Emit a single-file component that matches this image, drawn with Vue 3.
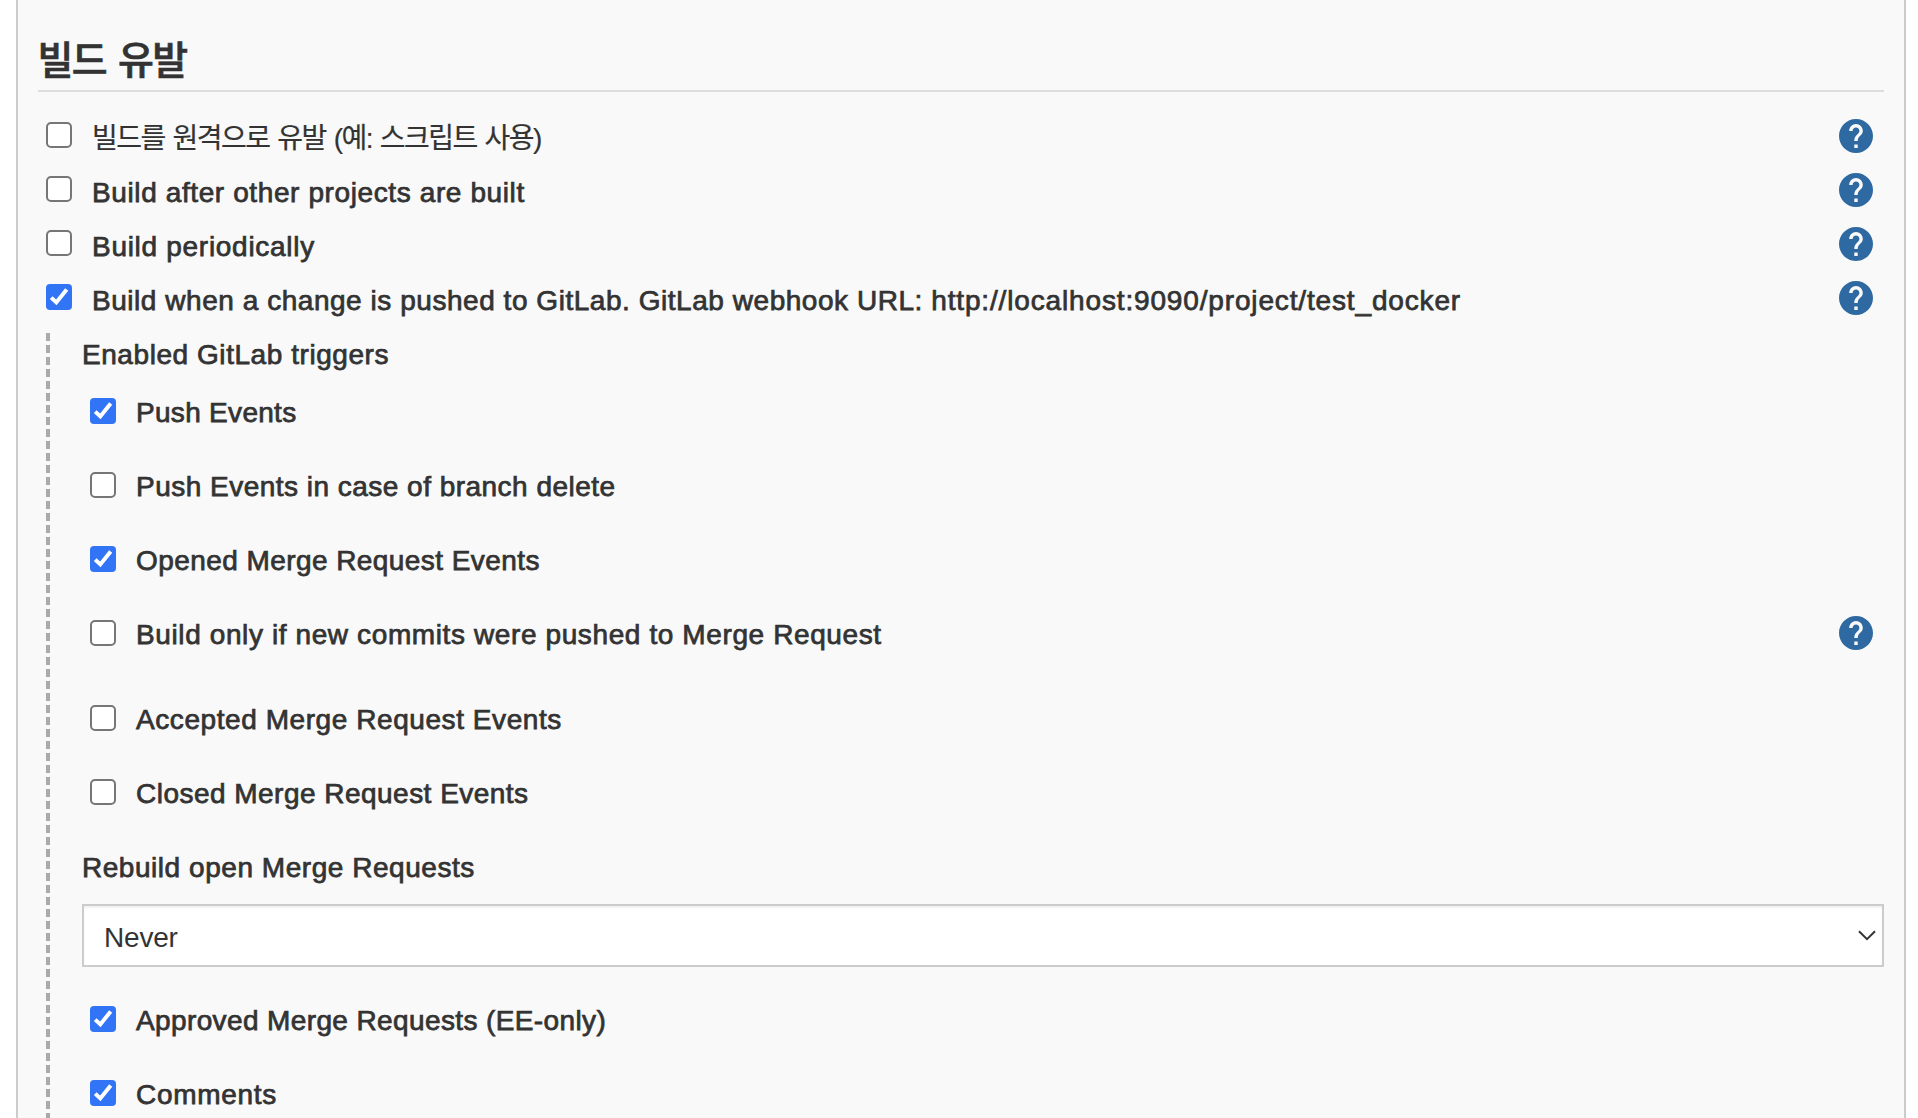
<script setup>
const triggers = [
  { text: '빌드를 원격으로 유발 (예: 스크립트 사용)', cls: 'korean', checked: false },
  { text: 'Build after other projects are built', cls: 't-after', checked: false },
  { text: 'Build periodically', cls: 't-period', checked: false },
  { text: 'Build when a change is pushed to GitLab. GitLab webhook URL: ', url: 'http://localhost:9090/project/test_docker', cls: 't-gitlab', checked: true },
]
const events = [
  { text: 'Push Events', cls: 't-push', checked: true },
  { text: 'Push Events in case of branch delete', cls: 't-delete', checked: false },
  { text: 'Opened Merge Request Events', cls: 't-opened', checked: true },
  { text: 'Build only if new commits were pushed to Merge Request', cls: 't-commits', checked: false, help: true },
  { text: 'Accepted Merge Request Events', cls: 't-accepted', checked: false },
  { text: 'Closed Merge Request Events', cls: 't-closed', checked: false },
]
const reviews = [
  { text: 'Approved Merge Requests (EE-only)', cls: 't-approved', checked: true },
  { text: 'Comments', cls: 't-comments', checked: true },
]
const helpPath = 'M12 2C6.48 2 2 6.48 2 12s4.48 10 10 10 10-4.48 10-10S17.52 2 12 2zm1 17h-2v-2h2v2zm2.07-7.75-.9.92C13.45 12.9 13 13.5 13 15h-2v-.5c0-1.1.45-2.1 1.17-2.83l1.24-1.26c.37-.36.59-.86.59-1.41 0-1.1-.9-2-2-2s-2 .9-2 2H8c0-2.21 1.79-4 4-4s4 1.79 4 4c0 .88-.36 1.68-.93 2.25z'
const checkPath = 'M5.2 13.6 10.3 18.4 20.7 5.4'
</script>

<template>
  <div class="page">
    <section class="panel">
      <h2 class="title">빌드 유발</h2>

      <div class="triggers">
        <label v-for="t in triggers" :key="t.text" class="row">
          <span class="box" :class="{ on: t.checked }">
            <svg v-if="t.checked" viewBox="0 0 26 26"><path :d="checkPath" /></svg>
          </span>
          <span class="label" :class="t.cls">{{ t.text }}<span v-if="t.url" class="url">{{ t.url }}</span></span>
          <svg class="help" viewBox="2 2 20 20"><path :d="helpPath" /></svg>
        </label>
      </div>

      <div class="nested">
        <div class="caption t-enabled">Enabled GitLab triggers</div>
        <label v-for="e in events" :key="e.text" class="row event" :class="{ tall: e.help }">
          <span class="box" :class="{ on: e.checked }">
            <svg v-if="e.checked" viewBox="0 0 26 26"><path :d="checkPath" /></svg>
          </span>
          <span class="label" :class="e.cls">{{ e.text }}</span>
          <svg v-if="e.help" class="help" viewBox="2 2 20 20"><path :d="helpPath" /></svg>
        </label>
        <div class="caption rebuild t-rebuild">Rebuild open Merge Requests</div>
        <div class="select">
          <span class="t-never">Never</span>
          <svg viewBox="0 0 18 11"><path d="M1 1.2 9 9.2 17 1.2" /></svg>
        </div>
        <label v-for="r in reviews" :key="r.text" class="row event">
          <span class="box" :class="{ on: r.checked }">
            <svg v-if="r.checked" viewBox="0 0 26 26"><path :d="checkPath" /></svg>
          </span>
          <span class="label" :class="r.cls">{{ r.text }}</span>
        </label>
      </div>
    </section>
  </div>
</template>

<style scoped>
.page {
  width: 1918px;
  height: 1118px;
  overflow: hidden;
  box-sizing: border-box;
  padding: 0 12px 0 16px;
  background: #fff;
  color: #333;
  font-family: "Liberation Sans", "Noto Sans CJK KR", sans-serif;
  font-size: 28px;
  line-height: 34px;
}
.panel {
  height: 1118px;
  box-sizing: border-box;
  border: solid #ccc;
  border-width: 0 2px;
  background: #f9f9f9;
  padding: 0 20px;
}
.title {
  margin: 0;
  height: 92px;
  box-sizing: border-box;
  border-bottom: 2px solid #ddd;
  padding-top: 28px;
  font: 500 39px/58px "Noto Sans CJK KR", sans-serif;
  letter-spacing: -1.6px;
  word-spacing: 4.8px;
  text-indent: -0.5px;
  white-space: nowrap;
  -webkit-text-stroke: 0.7px #333;
}
.triggers {
  padding-top: 30px;
}
.row {
  display: flex;
  align-items: flex-start;
  height: 54px;
  padding-left: 8px;
}
.box {
  flex: none;
  width: 26px;
  height: 26px;
  box-sizing: border-box;
  border: 2px solid #767676;
  border-radius: 5px;
  background: #fff;
}
.box.on {
  border: 0;
  border-radius: 4px;
  background: #3174f6;
}
.box svg {
  display: block;
}
.box path {
  fill: none;
  stroke: #fff;
  stroke-width: 4;
}
.label {
  margin-left: 20px;
  height: 34px;
  white-space: nowrap;
}
.label,
.caption {
  -webkit-text-stroke: 0.75px #333;
}
.label.korean {
  letter-spacing: -1.55px;
  word-spacing: 1.7px;
  -webkit-text-stroke-width: 0.2px;
}
.t-after { letter-spacing: 0.61px; }
.t-period { letter-spacing: 0.71px; }
.t-gitlab { letter-spacing: 0.54px; white-space: pre; }
.url { letter-spacing: 0.85px; }
.t-enabled { letter-spacing: 0.56px; }
.t-push { letter-spacing: 0.3px; }
.t-delete { letter-spacing: 0.48px; }
.t-opened { letter-spacing: 0.43px; }
.t-commits { letter-spacing: 0.61px; }
.t-accepted { letter-spacing: 0.57px; }
.t-closed { letter-spacing: 0.475px; }
.t-rebuild { letter-spacing: 0.54px; }
.t-never { letter-spacing: -0.2px; }
.t-approved { letter-spacing: 0.38px; }
.t-comments { letter-spacing: 0.7px; }
.help {
  flex: none;
  width: 34px;
  height: 34px;
  margin: -3px 11px 0 auto;
  fill: #2f69a1;
}
.nested {
  margin-left: 8px;
  margin-top: -5px;
  height: 785px;
  padding-left: 36px;
  background: repeating-linear-gradient(to bottom, #aaa 0 8px, transparent 8px 12px) 0 0 / 4px 100% no-repeat;
}
.nested .caption {
  height: 65px;
  padding-top: 5px;
  box-sizing: border-box;
  white-space: nowrap;
}
.event {
  height: 74px;
}
.event .label {
  margin-top: -2px;
}
.event .help {
  margin-top: -4px;
}
.event.tall {
  height: 85px;
}
.nested .rebuild {
  height: 53px;
  margin-top: -2px;
  padding-top: 0;
}
.select {
  display: flex;
  align-items: center;
  justify-content: space-between;
  height: 63px;
  margin-bottom: 39px;
  box-sizing: border-box;
  border: 2px solid #ccc;
  background: #fff;
  box-shadow: inset 0 2px 2px rgba(0, 0, 0, 0.06);
  padding: 0 6px 0 20px;
}
.select span {
  padding-top: 5px;
}
.select svg {
  width: 18px;
  height: 11px;
}
.select path {
  fill: none;
  stroke: #333;
  stroke-width: 2;
}
</style>
